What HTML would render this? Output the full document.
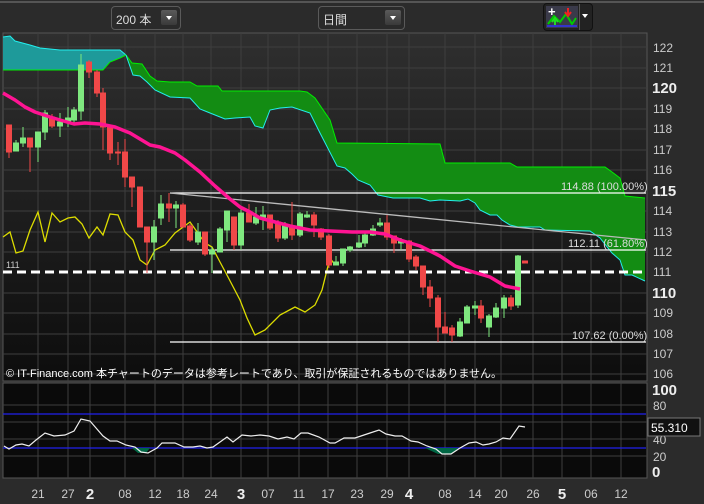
<!DOCTYPE html>
<html><head><meta charset="utf-8"><style>
html,body{margin:0;padding:0;background:#2b2b2b;width:704px;height:504px;overflow:hidden;font-family:"Liberation Sans","Noto Sans CJK JP",sans-serif}
.btn{position:absolute;border:1px solid #5a5a5a;border-radius:4px;background:#2a2a2a;color:#ddd;font-size:12px}
.dd{position:absolute;right:3px;top:3px;width:16px;height:15px;background:linear-gradient(#5a5a5a,#3a3a3a);border-radius:2px}
.dd:after{content:"";position:absolute;left:5px;top:6px;border-left:3px solid transparent;border-right:3px solid transparent;border-top:4px solid #fff}
svg text{font-family:"Liberation Sans","Noto Sans CJK JP",sans-serif}
</style></head><body>
<div style="position:absolute;left:0;top:1px;width:704px;height:2px;background:#555"></div>
<div class="btn" style="left:111px;top:6px;width:68px;height:22px"><span style="position:absolute;left:4px;top:4px">200 本</span><div class="dd"></div></div>
<div class="btn" style="left:318px;top:6px;width:85px;height:22px"><span style="position:absolute;left:4px;top:4px">日間</span><div class="dd"></div></div>
<div class="btn" style="left:543px;top:3px;width:48px;height:26px;background:#222;border-color:#111">
<div style="position:absolute;left:2px;top:2px;width:32px;height:22px;background:#3a3a4a"></div>
<div style="position:absolute;left:4px;top:3px;color:#fff;font-weight:bold;font-size:13px;line-height:10px">+</div>
<svg style="position:absolute;left:2px;top:2px" width="32" height="22"><polyline points="2,18 8,10 14,16 20,8 26,18 30,12" fill="none" stroke="#0c0" stroke-width="2"/><path d="M22 2v6M19 6l3 4 3-4" stroke="#e22" stroke-width="2" fill="none"/><path d="M9 20v-6M6 16l3-4 3 4" stroke="#2d2" stroke-width="2" fill="none"/><rect x="1" y="19" width="30" height="2" fill="#33c"/></svg>
<div style="position:absolute;left:35px;top:0;width:1px;height:26px;background:#555"></div>
<div style="position:absolute;left:38px;top:10px;border-left:3px solid transparent;border-right:3px solid transparent;border-top:4px solid #fff"></div>
</div>
<svg width="704" height="504" style="position:absolute;left:0;top:0">
<defs><linearGradient id="bg" x1="0" y1="0" x2="0" y2="1"><stop offset="0" stop-color="#2f2f2f"/><stop offset="1" stop-color="#0d0d0d"/></linearGradient></defs>
<rect x="3" y="33" width="644" height="348" fill="url(#bg)" stroke="#555"/>
<rect x="3" y="383" width="644" height="95" fill="#0a0a0a" stroke="#555"/>
<g stroke="#3e3e3e" stroke-width="1">
<path d="M3 47H647M3 68H647M3 88H647M3 109H647M3 129H647M3 150H647M3 170H647M3 191H647M3 211H647M3 232H647M3 252H647M3 293H647M3 313H647M3 334H647M3 354H647M3 374H647"/>
<path d="M38 33V381M68 33V381M90 33V381M125 33V381M155 33V381M183 33V381M211 33V381M241 33V381M268 33V381M299 33V381M328 33V381M357 33V381M387 33V381M409 33V381M445 33V381M475 33V381M501 33V381M533 33V381M562 33V381M591 33V381M621 33V381"/>
<path d="M38 383V478M68 383V478M90 383V478M125 383V478M155 383V478M183 383V478M211 383V478M241 383V478M268 383V478M299 383V478M328 383V478M357 383V478M387 383V478M409 383V478M445 383V478M475 383V478M501 383V478M533 383V478M562 383V478M591 383V478M621 383V478M3 405H647M3 439H647M3 456H647M3 422H647"/>
</g>
<polygon points="3,37 10,36 15,41 30,45 40,48 60,50 120,50 126,55 120,58 110,62 103,70 3,70" fill="#1e9a9a" />
<polyline points="3,37 10,36 15,41 30,45 40,48 60,50 120,50 126,55" fill="none" stroke="#2ee" stroke-width="1"/>
<polyline points="3,70 103,70 110,62 120,58 126,55" fill="none" stroke="#0e0" stroke-width="1"/>
<polygon points="126,55 132,63 142,64 150,76 157,81 170,82 190,82 197,86 218,86 222,91 300,91 307,92 315,98 330,120 337,143 440,144 445,163 510,163 517,167 605,167 612,172 620,178 625,196 645,198 645,281 632,275 625,275 620,260 612,253 600,238 590,231 545,230 540,227 518,227 510,225 502,220 497,215 490,215 480,210 475,203 468,199 460,201 440,200 430,201 420,198 393,198 378,195 370,185 358,180 352,174 345,168 337,166 320,133 310,113 292,107 280,108 270,110 263,128 255,126 250,117 235,118 225,119 210,113 200,109 190,98 170,97 155,90 147,82 140,76 133,75" fill="#138c13"/>
<polyline points="126,55 132,63 142,64 150,76 157,81 170,82 190,82 197,86 218,86 222,91 300,91 307,92 315,98 330,120 337,143 440,144 445,163 510,163 517,167 605,167 612,172 620,178 625,196 645,198" fill="none" stroke="#0e0"/>
<polyline points="126,55 133,75 140,76 147,82 155,90 170,97 190,98 200,109 210,113 225,119 235,118 250,117 255,126 263,128 270,110 280,108 292,107 310,113 320,133 337,166 345,168 352,174 358,180 370,185 378,195 393,198 420,198 430,201 440,200 460,201 468,199 475,203 480,210 490,215 497,215 502,220 510,225 518,227 540,227 545,230 590,231 600,238 612,253 620,260 625,275 632,275 645,281" fill="none" stroke="#2ee"/>
<polyline points="3,237 10,232 16,253 23,251 30,230 38,212 45,242 52,213 60,222 68,218 75,217 82,224 89,238 97,227 103,235 110,214 118,215 125,232 133,240 140,260 147,265 155,250 165,245 175,233 190,222 205,243 212,247 220,262 228,277 240,300 247,318 255,335 265,330 280,315 295,307 305,312 315,305 322,290 330,258 335,265" fill="none" stroke="#dd0" stroke-width="1.3"/>
<path d="M170 193H646M170 250H646M170 342H646" stroke="#fff" stroke-width="1.3"/>
<path d="M170 193L646 240" stroke="#bbb" stroke-width="1.3"/>
<path d="M3 272H646" stroke="#fff" stroke-width="3" stroke-dasharray="9,5"/>
<text x="6" y="268" fill="#ccc" font-size="9">111</text>
<g stroke-width="1">
<g stroke="#f04848" fill="#f04848">
<path d="M9 125V158M30 138V172M52 114V128M89 60V78M97 70V97M103 88V150M110 125V160M118 142V165M125 139V187M132 177V207M140 187V227M147 227V273M169 193V222M183 203V227M190 224V242M205 232V256M234 217V250M249 204V222M270 215V230M278 220V242M292 202V240M314 212V237M321 228V240M329 234V268M387 215V240M394 236V253M409 240V262M416 255V270M423 266V295M430 280V307M438 295V342M445 312V333M452 325V342M481 300V323M511 295V310"/>
<rect x="6.5" y="125" width="5" height="27"/><rect x="27.5" y="138" width="5" height="9"/><rect x="49.5" y="117" width="5" height="9"/><rect x="86.5" y="62" width="5" height="10"/><rect x="94.5" y="72" width="5" height="21"/><rect x="100.5" y="93" width="5" height="34"/><rect x="107.5" y="127" width="5" height="26"/><rect x="115.5" y="152" width="5" height="1"/><rect x="122.5" y="152" width="5" height="25"/><rect x="129.5" y="177" width="5" height="10"/><rect x="137.5" y="187" width="5" height="40"/><rect x="144.5" y="227" width="5" height="15"/><rect x="166.5" y="204" width="5" height="4"/><rect x="180.5" y="205" width="5" height="22"/><rect x="187.5" y="226" width="5" height="14"/><rect x="202.5" y="232" width="5" height="22"/><rect x="231.5" y="217" width="5" height="28"/><rect x="246.5" y="213" width="5" height="9"/><rect x="267.5" y="215" width="5" height="13"/><rect x="275.5" y="222" width="5" height="16"/><rect x="289.5" y="227" width="5" height="8"/><rect x="311.5" y="215" width="5" height="10"/><rect x="318.5" y="229" width="5" height="8"/><rect x="326.5" y="236" width="5" height="29"/><rect x="384.5" y="223" width="5" height="14"/><rect x="391.5" y="236" width="5" height="7"/><rect x="406.5" y="241" width="5" height="18"/><rect x="413.5" y="257" width="5" height="9"/><rect x="420.5" y="266" width="5" height="21"/><rect x="427.5" y="287" width="5" height="11"/><rect x="435.5" y="298" width="5" height="29"/><rect x="442.5" y="327" width="5" height="6"/><rect x="449.5" y="328" width="5" height="7"/><rect x="478.5" y="306" width="5" height="12"/><rect x="508.5" y="298" width="5" height="8"/><rect x="522.5" y="261" width="5" height="2"/>
</g>
<g stroke="#7fe87f" fill="#7fe87f">
<path d="M16 140V151M23 127V147M38 132V162M45 110V140M60 113V137M68 107V127M74 107V123M81 54V120M154 220V260M161 195V225M176 201V228M198 223V245M212 247V273M220 227V252M227 211V242M241 207V250M256 207V225M263 206V230M285 222V240M300 212V237M307 211V218M336 256V265M343 249V266M350 246V252M359 235V248M365 233V247M373 225V236M380 218V227M401 238V250M460 318V337M467 305V323M475 301V315M489 314V337M496 303V318M504 295V318M518 255V308"/>
<rect x="13.5" y="143" width="5" height="8"/><rect x="20.5" y="138" width="5" height="5"/><rect x="35.5" y="132" width="5" height="15"/><rect x="42.5" y="113" width="5" height="19"/><rect x="57.5" y="122" width="5" height="4"/><rect x="65.5" y="118" width="5" height="4"/><rect x="71.5" y="110" width="5" height="10"/><rect x="78.5" y="65" width="5" height="46"/><rect x="151.5" y="227" width="5" height="15"/><rect x="158.5" y="204" width="5" height="14"/><rect x="173.5" y="205" width="5" height="3"/><rect x="195.5" y="232" width="5" height="10"/><rect x="209.5" y="250" width="5" height="4"/><rect x="217.5" y="229" width="5" height="23"/><rect x="224.5" y="211" width="5" height="19"/><rect x="238.5" y="213" width="5" height="32"/><rect x="253.5" y="217" width="5" height="6"/><rect x="260.5" y="215" width="5" height="2"/><rect x="282.5" y="225" width="5" height="13"/><rect x="297.5" y="214" width="5" height="21"/><rect x="304.5" y="215" width="5" height="2"/><rect x="333.5" y="262" width="5" height="3"/><rect x="340.5" y="249" width="5" height="14"/><rect x="347.5" y="247" width="5" height="3"/><rect x="356.5" y="243" width="5" height="4"/><rect x="362.5" y="235" width="5" height="8"/><rect x="370.5" y="229" width="5" height="6"/><rect x="377.5" y="223" width="5" height="2"/><rect x="398.5" y="241" width="5" height="2"/><rect x="457.5" y="322" width="5" height="14"/><rect x="464.5" y="307" width="5" height="16"/><rect x="472.5" y="306" width="5" height="2"/><rect x="486.5" y="316" width="5" height="11"/><rect x="493.5" y="308" width="5" height="9"/><rect x="501.5" y="298" width="5" height="10"/><rect x="515.5" y="256" width="5" height="49"/>
</g></g>
<polyline points="3,93 15,100 25,107 35,112 50,117 60,120 74,124 85,123 100,124 115,127 130,133 150,145 160,147 175,153 185,160 200,172 215,186 230,199 240,207 250,212 260,218 275,222 290,226 310,230 330,231 352,232 370,232 385,234 400,240 420,246 440,256 455,266 470,271 490,277 505,286 520,289" fill="none" stroke="#ff1493" stroke-width="3.5" stroke-linejoin="round"/>
<g fill="#ddd" font-size="11">
<text x="561" y="190">114.88 (100.00%)</text><text x="568" y="247">112.11 (61.80%)</text><text x="572" y="339">107.62 (0.00%)</text>
</g>
<g fill="#ccc" font-size="12">
<text x="653" y="52">122</text><text x="653" y="72">121</text><text x="653" y="113">119</text><text x="653" y="133">118</text><text x="653" y="154">117</text><text x="653" y="174">116</text><text x="653" y="215">114</text><text x="653" y="236">113</text><text x="653" y="256">112</text><text x="653" y="276">111</text><text x="653" y="317">109</text><text x="653" y="338">108</text><text x="653" y="358">107</text><text x="653" y="378">106</text>
<text x="653" y="410">80</text><text x="653" y="444">40</text><text x="653" y="461">20</text>
</g>
<g fill="#eee" font-size="15" font-weight="bold">
<text x="652" y="93">120</text><text x="652" y="196">115</text><text x="652" y="298">110</text><text x="652" y="395">100</text><text x="652" y="477">0</text>
</g>
<text x="6" y="377" fill="#fff" font-size="11">© IT-Finance.com 本チャートのデータは参考レートであり、取引が保証されるものではありません。</text>
<path d="M3 414H646M3 448H646" stroke="#22e" stroke-width="1.3"/>
<polygon points="132,448 138,453 146,453 150,448" fill="#064"/>
<polygon points="425,448 438,454 452,454 458,448" fill="#064"/>
<polyline points="4,446 9,449 16,445 22,444 29,446 36,440 45,433 54,436 65,435 74,431 81,419 90,421 103,436 110,441 117,441 126,445 135,447 141,452 148,453 157,448 162,443 175,443 184,447 193,447 200,446 207,448 213,447 227,437 233,442 242,435 251,436 260,435 269,436 278,439 287,437 294,439 301,433 308,433 319,437 330,443 335,443 344,438 355,438 361,436 370,433 379,430 386,434 395,436 402,436 411,441 418,442 427,446 436,449 442,454 451,454 460,448 469,443 476,442 483,445 489,444 496,442 503,438 510,439 519,426 525,427" fill="none" stroke="#eee" stroke-width="1.2"/>
<rect x="648" y="418" width="52" height="18" fill="#111" stroke="#777"/>
<text x="651" y="432" fill="#fff" font-size="12">55.310</text>
<g fill="#ccc" font-size="12" text-anchor="middle">
<text x="38" y="498">21</text><text x="68" y="498">27</text><text x="125" y="498">08</text><text x="155" y="498">12</text><text x="183" y="498">18</text><text x="211" y="498">24</text><text x="268" y="498">07</text><text x="299" y="498">11</text><text x="328" y="498">17</text><text x="357" y="498">23</text><text x="387" y="498">29</text><text x="445" y="498">08</text><text x="475" y="498">14</text><text x="501" y="498">20</text><text x="533" y="498">26</text><text x="591" y="498">06</text><text x="621" y="498">12</text>
</g>
<g fill="#eee" font-size="15" font-weight="bold" text-anchor="middle">
<text x="90" y="499">2</text><text x="241" y="499">3</text><text x="409" y="499">4</text><text x="562" y="499">5</text>
</g>
</svg>
</body></html>
